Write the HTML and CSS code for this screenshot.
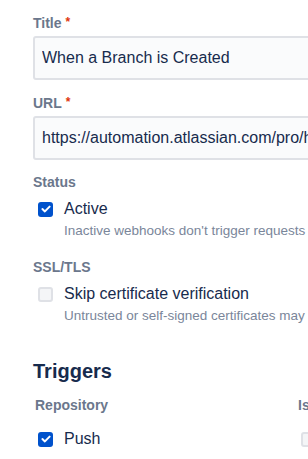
FILE: index.html
```html
<!DOCTYPE html>
<html lang="en">
<head>
    <meta charset="UTF-8">
    <meta name="viewport" content="width=device-width, initial-scale=1.0">
    <title>Edit webhook</title>
    <link rel="stylesheet" href="styles.css">
</head>
<body>
    <form class="webhook-form">
        <div class="field">
            <label class="field-label" for="title">Title<span class="required">*</span></label>
            <input class="text-input" id="title" type="text" value="When a Branch is Created">
        </div>

        <div class="field">
            <label class="field-label" for="url">URL<span class="required">*</span></label>
            <input class="text-input" id="url" type="text" value="https://automation.atlassian.com/pro/hooks/3f9a2c1e7b">
        </div>

        <div class="field field-group">
            <div class="field-label">Status</div>
            <label class="check-row">
                <span class="check-box checked">
                    <svg width="10" height="8" viewBox="0 0 10 8"><path d="M1.4 4.1 3.9 6.4 8.6 1.6" fill="none" stroke="#fff" stroke-width="2" stroke-linecap="round" stroke-linejoin="round"/></svg>
                </span>
                <span class="check-text">Active</span>
            </label>
            <div class="help">Inactive webhooks don't trigger requests</div>
        </div>

        <div class="field field-group">
            <div class="field-label">SSL/TLS</div>
            <label class="check-row">
                <span class="check-box"></span>
                <span class="check-text">Skip certificate verification</span>
            </label>
            <div class="help">Untrusted or self-signed certificates may be accepted</div>
        </div>

        <h2 class="section-title">Triggers</h2>

        <div class="trigger-grid">
            <div class="trigger-col">
                <div class="field-label col-label">Repository</div>
                <label class="check-row">
                    <span class="check-box checked">
                        <svg width="10" height="8" viewBox="0 0 10 8"><path d="M1.4 4.1 3.9 6.4 8.6 1.6" fill="none" stroke="#fff" stroke-width="2" stroke-linecap="round" stroke-linejoin="round"/></svg>
                    </span>
                    <span class="check-text">Push</span>
                </label>
            </div>
            <div class="trigger-col">
                <div class="field-label col-label">Issue</div>
                <label class="check-row">
                    <span class="check-box"></span>
                    <span class="check-text">Created</span>
                </label>
            </div>
        </div>
    </form>
</body>
</html>
```

FILE: styles.css
```css
html, body {
    overflow: hidden;
}

body {
    margin: 0;
    background: #fff;
    font-family: "Liberation Sans", Arial, sans-serif;
    color: #172B4D;
}

/* form */
.webhook-form {
    width: 560px;
    padding: 14px 0 0 33px;
}

.field {
    margin-bottom: 14px;
}

.field-group {
    margin-bottom: 0;
}

.field-group + .field-group {
    margin-top: 18px;
}

.field-label {
    display: block;
    font-size: 14px;
    line-height: 16px;
    font-weight: 700;
    color: #6B778C;
    margin-bottom: 5px;
}

.required {
    color: #DE350B;
    font-size: 12px;
    vertical-align: 2px;
    margin-left: 4px;
}

.text-input {
    display: block;
    box-sizing: border-box;
    width: 100%;
    height: 44px;
    padding: 0 7px;
    border: 2px solid #DFE1E6;
    border-radius: 3px;
    background: #FAFBFC;
    font-family: inherit;
    font-size: 16px;
    color: #172B4D;
    outline: none;
}

/* checkboxes */
.check-row {
    display: flex;
    align-items: center;
    height: 24px;
    margin-top: 7px;
    padding-left: 5px;
    gap: 11px;
}

.check-box {
    box-sizing: border-box;
    width: 15px;
    height: 15px;
    border: 2px solid #DFE1E6;
    border-radius: 3px;
    background: #F4F5F7;
    display: flex;
    align-items: center;
    justify-content: center;
}

.check-box.checked {
    border: none;
    background: #0052CC;
}

.check-text {
    font-size: 16px;
    line-height: 24px;
    color: #172B4D;
}

.help {
    padding-left: 31px;
    font-size: 13.5px;
    line-height: 20px;
    color: #7A869A;
    white-space: nowrap;
}

/* triggers */
.section-title {
    margin: 33px 0 0;
    font-size: 20px;
    line-height: 24px;
    font-weight: 700;
    color: #172B4D;
}

.trigger-grid {
    display: grid;
    grid-template-columns: 263px 263px;
    margin-top: 14px;
}

.col-label {
    padding-left: 2px;
    margin-bottom: 0;
}

.trigger-col .check-row {
    margin-top: 14px;
}
```
